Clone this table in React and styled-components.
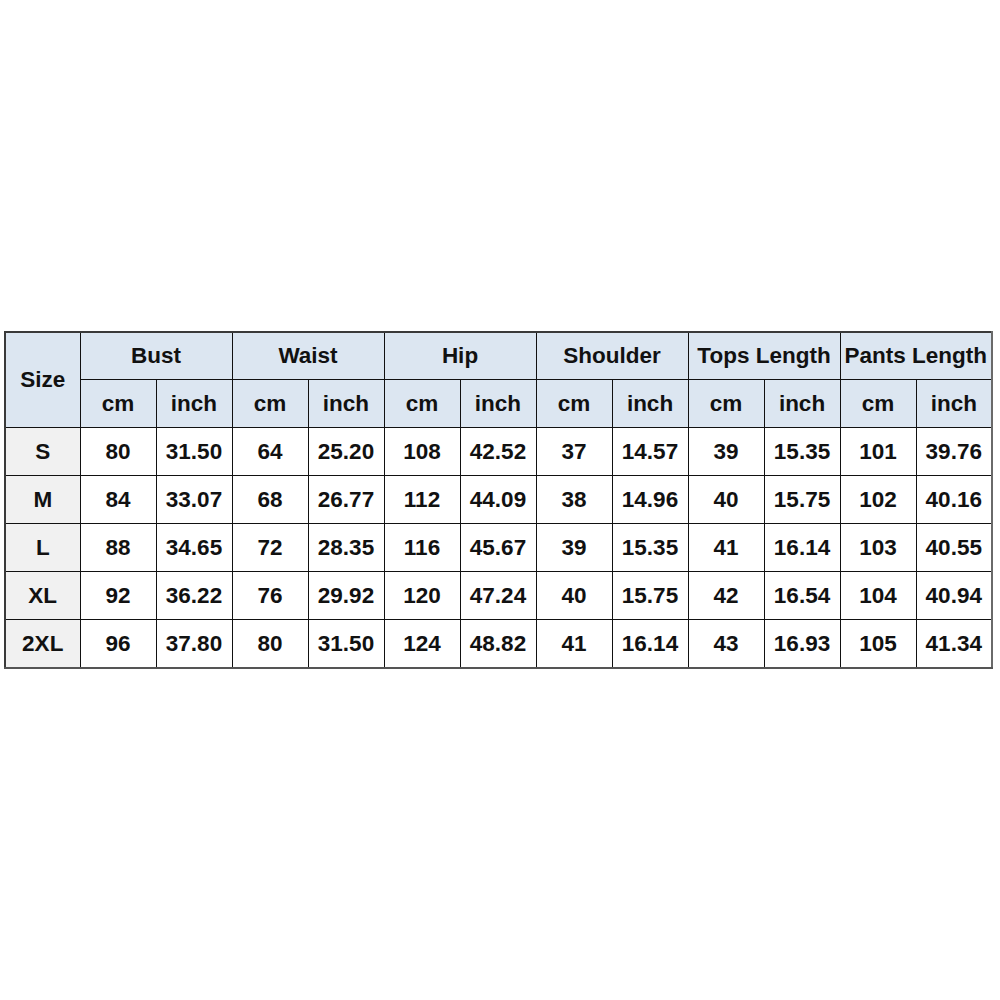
import React from "react";
import styled, { createGlobalStyle } from "styled-components";

const GlobalStyle = createGlobalStyle`
  html, body {
    margin: 0;
    padding: 0;
    background: #fff;
  }
`;

const groups = ["Bust", "Waist", "Hip", "Shoulder", "Tops Length", "Pants Length"];

const rows = [
  ["S", "80", "31.50", "64", "25.20", "108", "42.52", "37", "14.57", "39", "15.35", "101", "39.76"],
  ["M", "84", "33.07", "68", "26.77", "112", "44.09", "38", "14.96", "40", "15.75", "102", "40.16"],
  ["L", "88", "34.65", "72", "28.35", "116", "45.67", "39", "15.35", "41", "16.14", "103", "40.55"],
  ["XL", "92", "36.22", "76", "29.92", "120", "47.24", "40", "15.75", "42", "16.54", "104", "40.94"],
  ["2XL", "96", "37.80", "80", "31.50", "124", "48.82", "41", "16.14", "43", "16.93", "105", "41.34"],
];

const App = () => {
  return (
    <Page>
      <GlobalStyle />
      <Table>
        <colgroup>
          <Col $w={75} />
          {Array.from({ length: 12 }).map((_, i) => (
            <Col key={i} $w={76} />
          ))}
        </colgroup>
        <thead>
          <tr>
            <Head rowSpan={2}>Size</Head>
            {groups.map((g) => (
              <Head key={g} colSpan={2} $tall>
                {g}
              </Head>
            ))}
          </tr>
          <tr>
            {groups.map((g) => (
              <React.Fragment key={g}>
                <Head>cm</Head>
                <Head>inch</Head>
              </React.Fragment>
            ))}
          </tr>
        </thead>
        <tbody>
          {rows.map((row) => (
            <tr key={row[0]}>
              {row.map((cell, i) => (
                <Cell key={i} $label={i === 0}>
                  {cell}
                </Cell>
              ))}
            </tr>
          ))}
        </tbody>
      </Table>
    </Page>
  );
};

export default App;

const Page = styled.div`
  padding: 331px 0 0 4px;
  font-family: "Liberation Sans", Arial, sans-serif;
`;

const Col = styled.col`
  width: ${(p) => p.$w}px;
`;

const Table = styled.table`
  border-collapse: collapse;
  table-layout: fixed;
  width: 988px;
  border: 2px solid #3a3a3a;
  border-right-color: #6a6a6a;
  border-bottom-color: #555;
`;

const Head = styled.th`
  background: #dce6f1;
  color: #111;
  font-size: 22.5px;
  font-weight: bold;
  text-align: center;
  height: ${(p) => (p.$tall ? "46px" : "47px")};
  padding: 0;
  border: 1px solid #111;
  white-space: nowrap;
`;

const Cell = styled.td`
  background: ${(p) => (p.$label ? "#f1f1f1" : "#fff")};
  color: #111;
  font-size: 22.5px;
  font-weight: bold;
  text-align: center;
  height: 47px;
  padding: 0;
  border: 1px solid #111;
`;
